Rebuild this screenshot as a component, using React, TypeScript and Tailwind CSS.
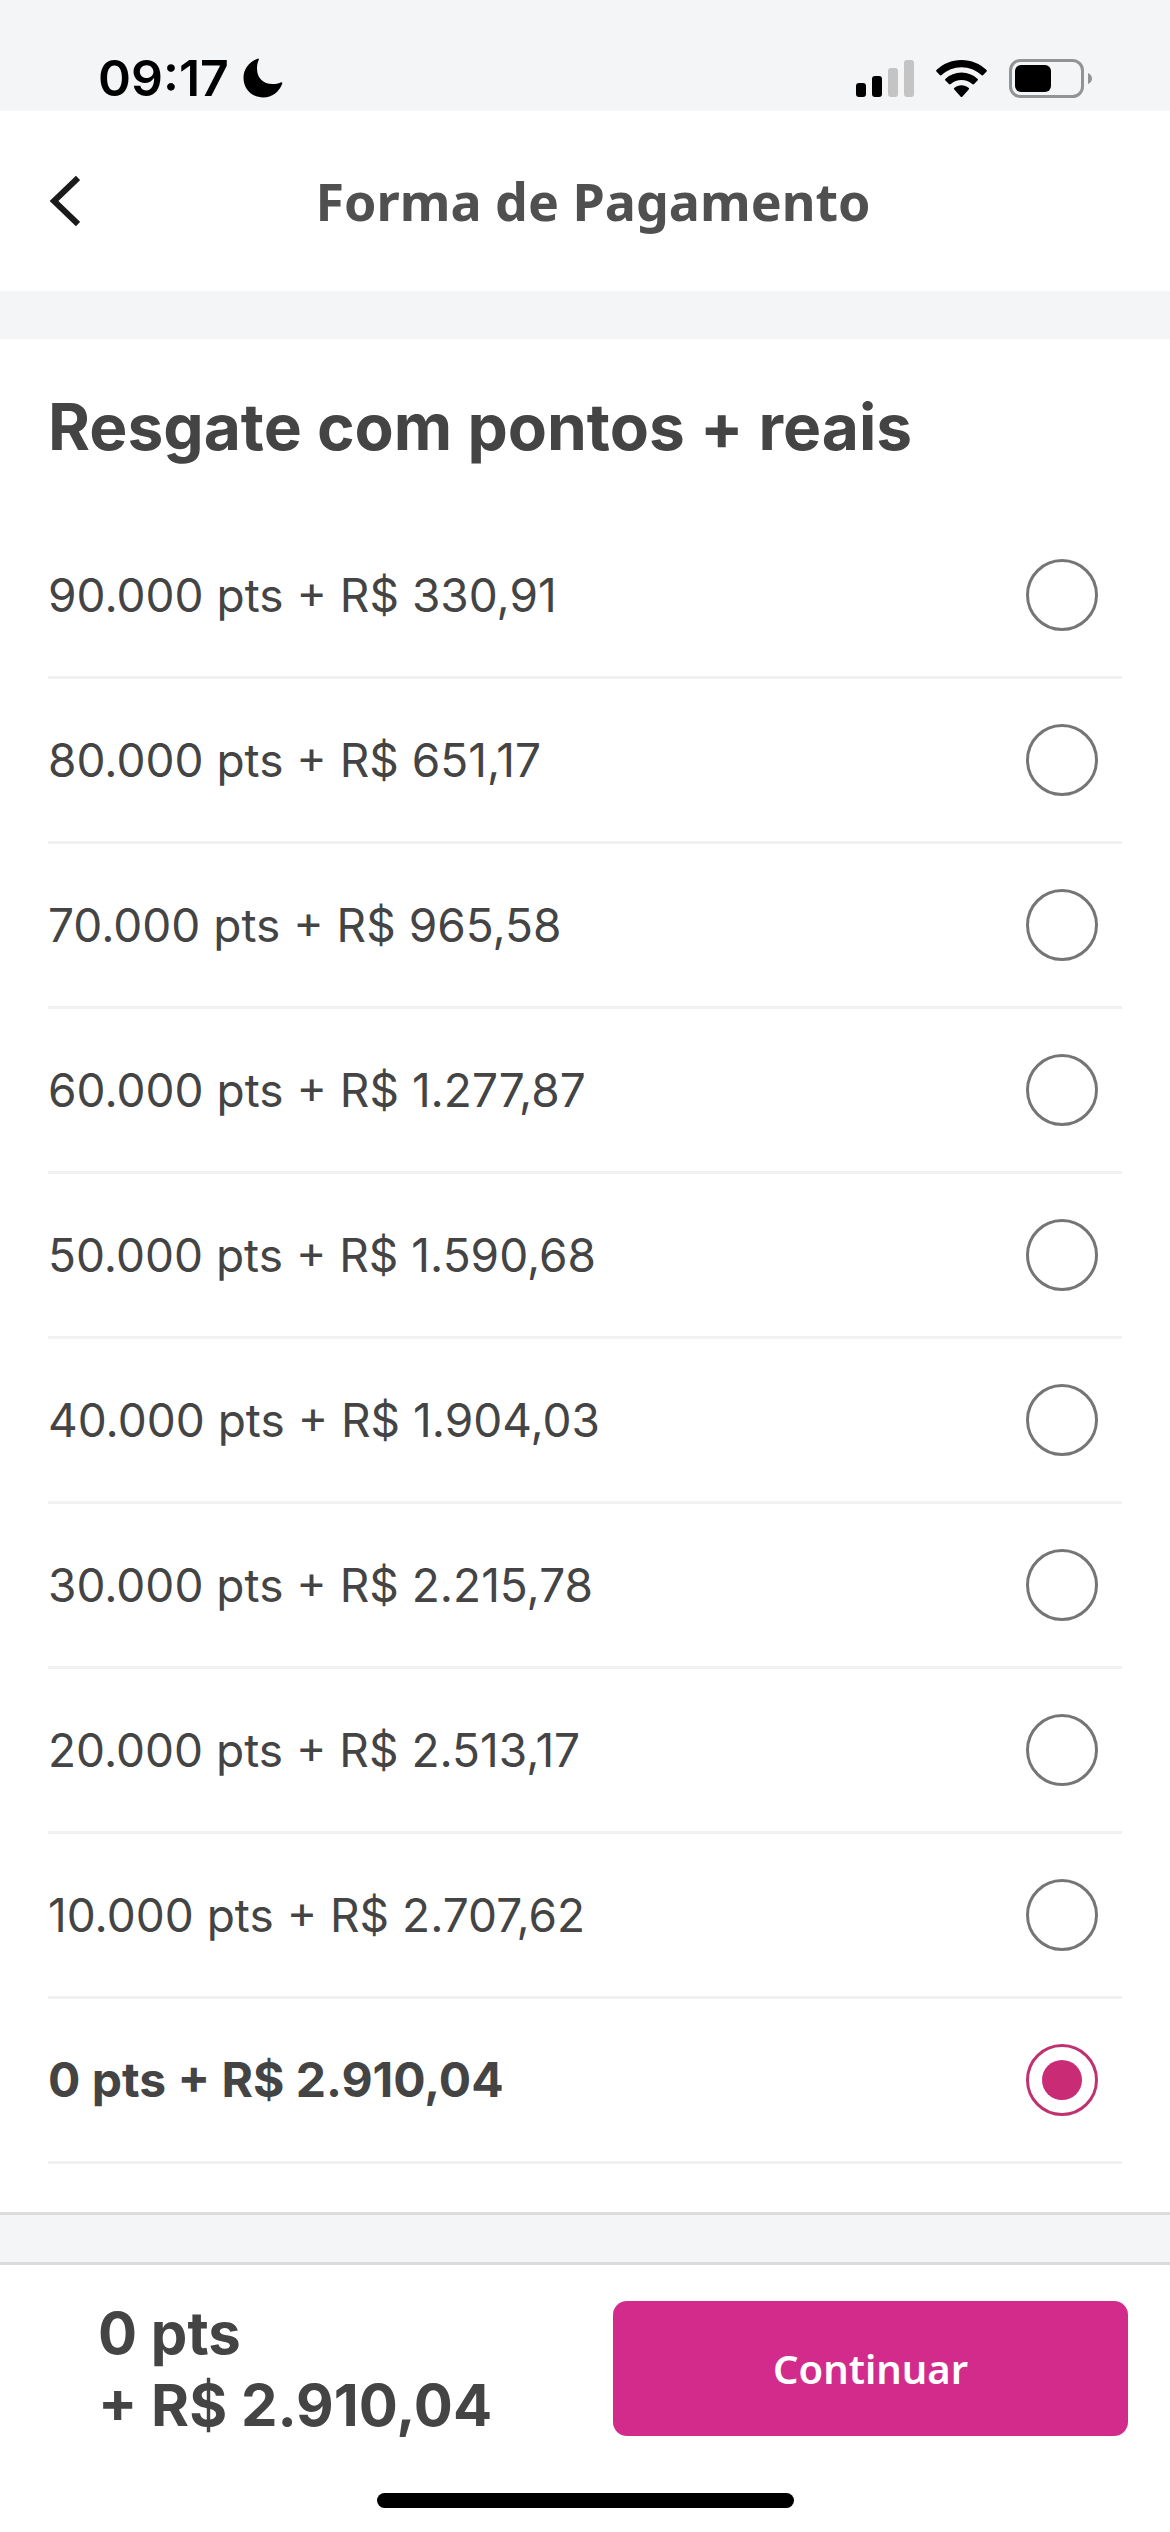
import { useState } from 'react'

const OPCOES = [
    { pontos: '90.000', reais: '330,91' },
    { pontos: '80.000', reais: '651,17' },
    { pontos: '70.000', reais: '965,58' },
    { pontos: '60.000', reais: '1.277,87' },
    { pontos: '50.000', reais: '1.590,68' },
    { pontos: '40.000', reais: '1.904,03' },
    { pontos: '30.000', reais: '2.215,78' },
    { pontos: '20.000', reais: '2.513,17' },
    { pontos: '10.000', reais: '2.707,62' },
    { pontos: '0', reais: '2.910,04' },
]

function StatusBar() {
    return (
        <div className="flex h-[111px] items-end justify-between bg-[#f4f5f7] pr-[78px] pb-[12px] pl-[98px] text-black">
            <div className="flex items-center gap-[14px]">
                <span className="text-[50px] leading-[42px] font-semibold">09:17</span>
                <svg className="h-[40px] w-[40px]" viewBox="0 0 40 40" fill="currentColor" aria-hidden="true">
                    <path d="M14.6.7c.8-.4 1.5.2 1.1 1.2C14.5 4.6 14 7.2 14 10.5 14 20 20 26 29.5 26c3.2 0 5.7-.5 8.2-1.5 1.3-.5 1.9.3 1.5 1.3C36.2 34 29 39.5 20.3 39.5 9 39.5.5 31 .5 19.7.5 11.2 6.2 3.9 14.6.7Z" />
                </svg>
            </div>
            <div className="flex items-center gap-[22px]">
                <svg className="h-[40px] w-[58px]" viewBox="0 0 58 40" aria-hidden="true">
                    <rect x="0" y="24" width="10" height="14" rx="3" />
                    <rect x="16" y="17" width="10" height="21" rx="3" />
                    <rect x="32" y="9" width="10" height="29" rx="3" fill="#c4c4c5" />
                    <rect x="48" y="1" width="10" height="37" rx="3" fill="#c4c4c5" />
                </svg>
                <svg className="h-[40px] w-[51px]" viewBox="0 0 51 40" aria-hidden="true">
                    <path d="M25.5 1C35.5 1 44 4.8 50.3 10.8c.7.7.7 1.3.1 1.9l-3.2 3.3c-.6.6-1.2.6-1.9 0C40 11.2 33 8.3 25.5 8.3S11 11.2 5.7 16c-.7.6-1.3.6-1.9 0L.6 12.7c-.6-.6-.6-1.2.1-1.9C7 4.8 15.5 1 25.5 1Z" />
                    <path d="M25.5 13.6c6.3 0 11.7 2.3 15.9 6.1.7.7.7 1.3.1 1.9l-3.4 3.5c-.6.6-1.2.5-1.9 0-3-2.6-6.6-4.1-10.7-4.1s-7.7 1.5-10.7 4.1c-.7.5-1.3.6-1.9 0L9.5 21.6c-.6-.6-.6-1.2.1-1.9 4.2-3.8 9.6-6.1 15.9-6.1Z" />
                    <path d="M25.5 26.2c2.7 0 5.1.9 7 2.5.8.6.8 1.2.2 1.8l-6.2 6.9c-.7.8-1.3.8-2 0l-6.2-6.9c-.6-.6-.6-1.2.2-1.8 1.9-1.6 4.3-2.5 7-2.5Z" />
                </svg>
                <svg className="h-[40px] w-[83px]" viewBox="0 0 83 40" aria-hidden="true">
                    <rect x="1.5" y="1.5" width="72" height="36" rx="10" fill="none" stroke="#929395" strokeWidth="3" />
                    <rect x="6" y="6" width="36" height="27" rx="6" />
                    <path d="M79 14c2.5 1 4 3 4 5.5s-1.5 4.500-4 5.500Z" fill="#929395" />
                </svg>
            </div>
        </div>
    )
}

function Header() {
    return (
        <header className="flex h-[180px] items-center bg-white px-[48px]">
            <button type="button" aria-label="Voltar" className="h-[52px] w-[32px]">
                <svg className="h-full w-full" viewBox="0 0 32 52" fill="none" stroke="#1a1a1a" strokeWidth="6" aria-hidden="true">
                    <path d="M30 3 6 26l24 23" />
                </svg>
            </button>
            <h1 className="flex-1 pr-[16px] text-center font-['Noto_Sans',sans-serif] text-[52px] leading-[64px] font-bold text-[#505050]">
                Forma de Pagamento
            </h1>
        </header>
    )
}

export default function App() {
    const [selecionada, setSelecionada] = useState(OPCOES.length - 1)
    const atual = OPCOES[selecionada]

    return (
        <div className="flex min-h-screen flex-col bg-[#f4f5f7] font-[Inter,sans-serif] text-[#444]">
            <StatusBar />
            <Header />

            <main className="mt-[48px] border-b-3 border-[#dcdcdc] bg-white px-[48px] pt-[48px] pb-[48px]">
                <h2 className="pb-[47px] text-[64px] leading-[80px] font-bold" id="titulo-resgate">
                    Resgate com pontos + reais
                </h2>
                <div role="radiogroup" aria-labelledby="titulo-resgate">
                    {OPCOES.map((o, i) => (
                        <label
                            key={o.pontos}
                            className="flex h-[165px] items-center justify-between border-b-3 border-[#f1f1f1] pr-[24px] text-[46px] leading-[60px] has-checked:text-[48px] has-checked:font-bold"
                        >
                            <span>{o.pontos} pts + R$ {o.reais}</span>
                            <input
                                type="radio"
                                name="opcao"
                                checked={i === selecionada}
                                onChange={() => setSelecionada(i)}
                                className="flex h-[72px] w-[72px] shrink-0 appearance-none items-center justify-center rounded-full border-3 border-[#757575] before:h-[40px] before:w-[40px] before:rounded-full checked:border-[#bf3270] checked:before:bg-[#c92c74]"
                            />
                        </label>
                    ))}
                </div>
            </main>

            <footer className="mt-[47px] flex flex-1 flex-col border-t-3 border-[#d9dadc] bg-white">
                <div className="flex items-start justify-between pr-[42px] pl-[98px]">
                    <p className="pt-[32px] text-[58px] leading-[72px] font-bold">
                        {atual.pontos} pts
                        <br />+ R$ {atual.reais}
                    </p>
                    <button
                        type="button"
                        className="mt-[36px] h-[135px] w-[50%] rounded-[14px] bg-[#d32b8c] font-['Noto_Sans',sans-serif] text-[40px] font-semibold text-white"
                    >
                        Continuar
                    </button>
                </div>
                <div className="mx-auto mt-auto mb-[24px] h-[15px] w-[417px] rounded-full bg-black" />
            </footer>
        </div>
    )
}
